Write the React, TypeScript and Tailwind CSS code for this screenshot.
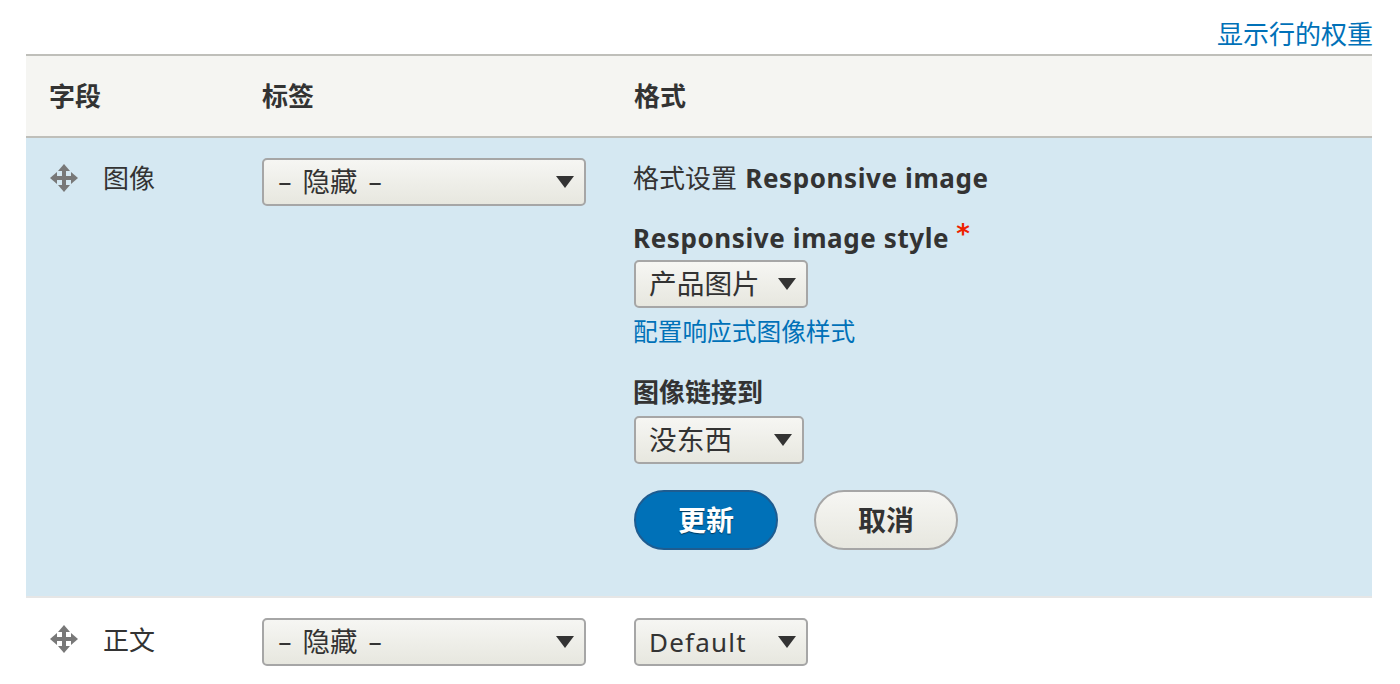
const FONT = "font-['DejaVu_Sans','Noto_Sans_CJK_SC',sans-serif]";
const LATIN = "font-['Noto_Sans','Noto_Sans_CJK_SC',sans-serif]";

function Drag() {
  return (
    <svg width="28" height="28" viewBox="0 0 28 28" className="shrink-0" fill="#787878">
      <polygon points="14,0 20,7 8,7" />
      <polygon points="14,28 20,21 8,21" />
      <polygon points="0,14 7,8 7,20" />
      <polygon points="28,14 21,8 21,20" />
      <rect x="12" y="5" width="4" height="18" />
      <rect x="5" y="12" width="18" height="4" />
    </svg>
  );
}

function Select({ text, className, textClass }: { text: string; className: string; textClass: string }) {
  return (
    <div
      className={`flex h-12 items-center justify-between rounded-[5px] border-2 border-[#a6a6a6] bg-gradient-to-b from-[#f6f6f3] to-[#e7e7df] pl-[14px] pr-[10px] leading-none text-[#333] ${className}`}
    >
      <span className={`whitespace-pre ${textClass}`}>{text}</span>
      <svg width="18" height="12" viewBox="0 0 18 12" fill="#333" className="shrink-0">
        <polygon points="0,0 18,0 9,12" />
      </svg>
    </div>
  );
}

export default function App() {
  return (
    <div className={`${FONT} h-[684px] overflow-hidden bg-white pl-[26px] pr-[28px] text-[26px] text-[#333]`}>
      <div className="flex h-[54px] items-start justify-end pt-[15px]">
        <a className="-mr-px text-[26px] leading-[40px] text-[#0071b8]">显示行的权重</a>
      </div>

      <div className="grid h-[84px] grid-cols-[213px_372px_1fr] items-center border-y-2 border-[#bfbfba] bg-[#f5f5f2] pl-[23px] pt-[2px] font-bold">
        <div>字段</div>
        <div>标签</div>
        <div>格式</div>
      </div>

      <div className="grid grid-cols-[212px_372px_1fr] border-b-2 border-[#e6e6e6] bg-[#d5e8f2] pb-[46px] pl-6 pt-5">
        <div className="flex h-10 items-center gap-[26px]">
          <Drag />
          <span className="-ml-px pt-[2px]">图像</span>
        </div>
        <div>
          <Select text="– 隐藏 –" className="w-[324px]" textClass="pt-[2px] text-[27.5px] [word-spacing:2px]" />
        </div>
        <div>
          <div className="-ml-px h-10 leading-[40px]">
            格式设置 <b className={`${LATIN} tracking-[0.6px]`}>Responsive image</b>
          </div>
          <div className="-ml-px mt-5 flex h-10 leading-[40px]">
            <b className={`${LATIN} tracking-[0.6px]`}>Responsive image style</b>
            <span className="ml-[7px] font-bold leading-[32px] text-[#ee2200]">*</span>
          </div>
          <Select text="产品图片" className="mt-[2px] w-[174px]" textClass="-ml-px pt-[2px] text-[27.7px]" />
          <a className="-ml-px mt-1 block h-10 text-[24.7px] leading-[42px] text-[#0071b8]">配置响应式图像样式</a>
          <div className="-ml-px mt-5 h-10 font-bold leading-[42px]">图像链接到</div>
          <Select text="没东西" className="mt-1 w-[170px]" textClass="-ml-px pt-[2px] text-[27.7px]" />
          <div className="mt-[26px] flex gap-9">
            <button className="h-[60px] w-[144px] rounded-full border-2 border-[#1e5c90] bg-[#0071b8] pt-[3px] text-[28px] font-bold text-white [text-shadow:0_1px_1px_rgba(0,0,0,0.5)]">
              更新
            </button>
            <button className="h-[60px] w-[144px] rounded-full border-2 border-[#a6a6a6] bg-gradient-to-b from-[#f6f6f3] to-[#e7e7df] pt-[3px] text-[28px] font-bold text-[#333]">
              取消
            </button>
          </div>
        </div>
      </div>

      <div className="grid grid-cols-[212px_372px_1fr] pl-6 pt-5">
        <div className="flex h-10 items-center gap-[26px] pt-[2px]">
          <Drag />
          <span className="-ml-px pt-[4px]">正文</span>
        </div>
        <div>
          <Select text="– 隐藏 –" className="w-[324px]" textClass="pt-[2px] text-[27.5px] [word-spacing:2px]" />
        </div>
        <div>
          <Select text="Default" className="w-[174px]" textClass={`${LATIN} -ml-px text-[26px] tracking-[1.2px]`} />
        </div>
      </div>
    </div>
  );
}
